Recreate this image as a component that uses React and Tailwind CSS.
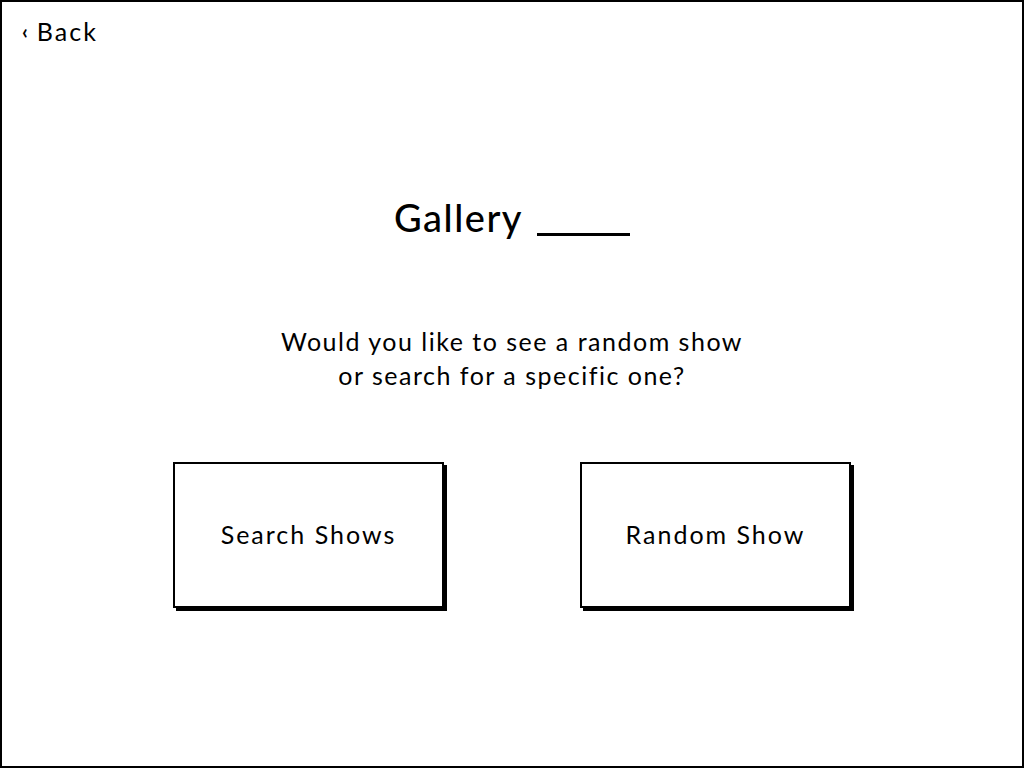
export default function App() {
  const font = { fontFamily: 'Lato, "Noto Sans", sans-serif' }

  return (
    <div className="w-[1024px] h-[768px] border-2 border-black bg-white text-black flex flex-col" style={font}>
      {/* Back link */}
      <div className="pl-[20px] pt-[20px] h-[38px] flex items-center gap-[7px] text-[25px] leading-none tracking-[0.08em]">
        <span className="text-[20px] font-bold">‹</span>
        <span>Back</span>
      </div>

      <h1 className="mt-[158px] text-center text-[38px] leading-none font-medium tracking-[0.04em]">
        Gallery<span className="inline-block relative top-[4px] ml-[14px] w-[93px] border-b-[3px] border-black align-baseline"></span>
      </h1>

      <p className="mt-[88px] text-center text-[25px] leading-[34px] tracking-[0.06em]">
        Would you like to see a random show
        <br />
        or search for a specific one?
      </p>

      <div className="mt-[70px] flex justify-center gap-[136px]">
        <button className="w-[271px] h-[146px] border-2 border-black bg-white shadow-[3px_3px_0_#000] text-[25px] tracking-[0.08em]">
          Search Shows
        </button>
        <button className="w-[271px] h-[146px] border-2 border-black bg-white shadow-[3px_3px_0_#000] text-[25px] tracking-[0.08em]">
          Random Show
        </button>
      </div>
    </div>
  )
}
